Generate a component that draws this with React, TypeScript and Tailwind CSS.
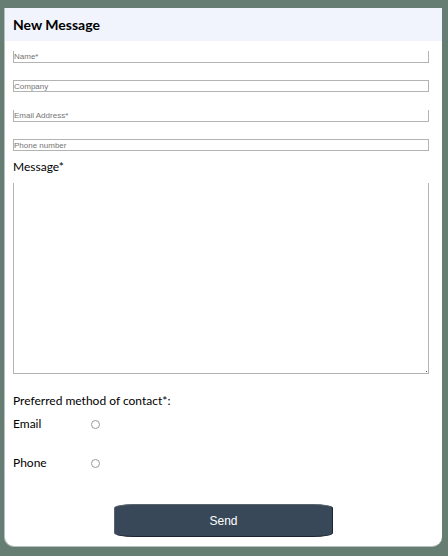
import type { InputHTMLAttributes } from "react";

type FieldProps = InputHTMLAttributes<HTMLInputElement> & { label: string };

function RequiredField({ label, ...rest }: FieldProps) {
  return (
    <input
      aria-label={label}
      placeholder={label}
      required
      className="block h-3 w-full border border-t-0 border-[#b3b3b3] bg-white px-0 font-['Liberation_Sans',Arial,sans-serif] text-[8px] leading-[10px] shadow-none outline-none placeholder:text-[#757575]"
      {...rest}
    />
  );
}

function OptionalField({ label, ...rest }: FieldProps) {
  return (
    <input
      aria-label={label}
      placeholder={label}
      className="block h-3 w-full border border-[#b3b3b3] bg-white px-0 font-['Liberation_Sans',Arial,sans-serif] text-[8px] leading-[10px] outline-none placeholder:text-[#757575]"
      {...rest}
    />
  );
}

function ContactOption({ id, label }: { id: string; label: string }) {
  return (
    <div className="flex h-4 items-center">
      <label htmlFor={id} className="w-[78px]">
        {label}
      </label>
      <input
        id={id}
        type="radio"
        name="contact"
        value={id}
        className="size-[9px] appearance-none rounded-full border border-[#9a9a9a] bg-white checked:bg-[#384859]"
      />
    </div>
  );
}

export default function App() {
  return (
    <main className="min-h-screen bg-[#667d73] pt-2 pr-[6px] pb-[9px] pl-1 font-['Trebuchet_MS',Lato,sans-serif] text-[12px] leading-4 text-black">
      <form
        className="overflow-hidden rounded-b-[10px] border-b border-l border-[#b5c1bc] bg-white"
        onSubmit={(event) => event.preventDefault()}
      >
        <h1 className="bg-[#f1f4fd] px-2 pt-[9px] pb-2 text-[14px] leading-4 font-bold">
          New Message
        </h1>
        <div className="pt-[10px] pr-[13px] pl-2">
          <div className="flex flex-col gap-[18px]">
            <div className="flex flex-col gap-[17px]">
              <RequiredField label="Name*" type="text" name="name" />
              <OptionalField label="Company" type="text" name="company" />
            </div>
            <div className="flex flex-col gap-[17px]">
              <RequiredField label="Email Address*" type="email" name="email" />
              <OptionalField label="Phone number" type="tel" name="phone" />
            </div>
          </div>
          <label htmlFor="message" className="mt-2 block">
            Message*
          </label>
          <div className="relative mt-2">
            <textarea
              id="message"
              name="message"
              required
              className="block h-[191px] w-full resize-none border border-t-0 border-[#b3b3b3] bg-white p-1 outline-none"
            />
            <span className="absolute right-[2px] bottom-[2px] size-px bg-[#555555]" />
          </div>
          <fieldset className="mt-[19px]">
            <legend className="mb-[7px]">Preferred method of contact*:</legend>
            <div className="flex flex-col gap-[23px]">
              <ContactOption id="email" label="Email" />
              <ContactOption id="phone" label="Phone" />
            </div>
          </fieldset>
        </div>
        <div className="flex justify-center pt-[33px] pb-[9px]">
          <button
            type="submit"
            className="h-[33px] w-1/2 rounded-[20px/4px] border border-t-[#58636b] border-r-[#1c2530] border-b-[#1c2530] border-l-[#58636b] bg-[#384859] font-['Liberation_Sans',Arial,sans-serif] text-[12px] text-white"
          >
            Send
          </button>
        </div>
      </form>
    </main>
  );
}
